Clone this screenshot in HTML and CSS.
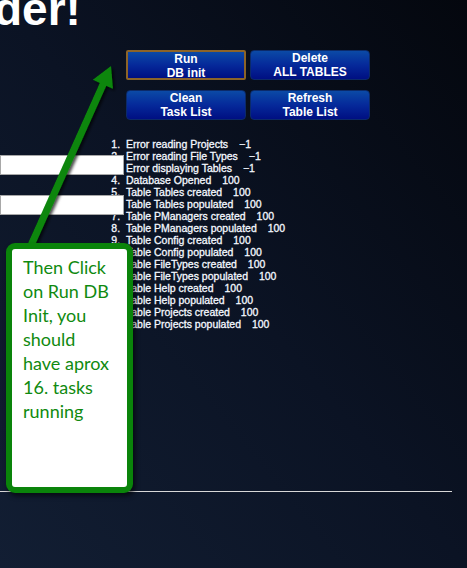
FILE: index.html
```html
<!DOCTYPE html>
<html>
<head>
<meta charset="utf-8">
<link rel="stylesheet" href="styles.css">
</head>
<body>
<div class="page">
  <h1 class="title">der!</h1>
  <div class="main">
    <div class="left">
      <input class="field" type="text">
      <input class="field field2" type="text">
    </div>
    <div class="right">
      <div class="buttons">
        <button class="btn btn-active">Run<br>DB init</button>
        <button class="btn">Delete<br>ALL TABLES</button>
        <button class="btn">Clean<br>Task List</button>
        <button class="btn">Refresh<br>Table List</button>
      </div>
      <ol class="tasks">
        <li>Error reading Projects <span class="v">−1</span></li>
        <li>Error reading File Types <span class="v">−1</span></li>
        <li>Error displaying Tables <span class="v">−1</span></li>
        <li>Database Opened <span class="v">100</span></li>
        <li>Table Tables created <span class="v">100</span></li>
        <li>Table Tables populated <span class="v">100</span></li>
        <li>Table PManagers created <span class="v">100</span></li>
        <li>Table PManagers populated <span class="v">100</span></li>
        <li>Table Config created <span class="v">100</span></li>
        <li>Table Config populated <span class="v">100</span></li>
        <li>Table FileTypes created <span class="v">100</span></li>
        <li>Table FileTypes populated <span class="v">100</span></li>
        <li>Table Help created <span class="v">100</span></li>
        <li>Table Help populated <span class="v">100</span></li>
        <li>Table Projects created <span class="v">100</span></li>
        <li>Table Projects populated <span class="v">100</span></li>
      </ol>
    </div>
  </div>
  <hr class="rule">

  <svg class="arrow" width="467" height="568" viewBox="0 0 467 568">
    <defs>
      <filter id="sh" x="-20%" y="-20%" width="140%" height="140%">
        <feDropShadow dx="2" dy="2" stdDeviation="1.5" flood-color="#000" flood-opacity="0.7"/>
      </filter>
    </defs>
    <g filter="url(#sh)" fill="#0a860a">
      <line x1="28" y1="252" x2="105" y2="80" stroke="#0a860a" stroke-width="7"/>
      <polygon points="111,66 92.8,79.8 112.9,88.8"/>
    </g>
  </svg>

  <div class="callout">Then Click on Run DB Init, you should have aprox 16. tasks running</div>
</div>
</body>
</html>
```

FILE: styles.css
```css
html, body {
  margin: 0;
  padding: 0;
}
body {
  width: 467px;
  height: 568px;
  overflow: hidden;
  background: linear-gradient(to top right, #121e33 0%, #0b1324 50%, #04070e 100%);
  font-family: "Liberation Sans", Arial, sans-serif;
}
.page {
  position: relative;
  display: flow-root;
  width: 467px;
  height: 568px;
}
.title {
  margin: -14px 0 0 -6px;
  height: 64px;
  font-size: 46px;
  line-height: 46px;
  font-weight: bold;
  color: #ffffff;
}
.main {
  display: flex;
  height: 441px;
}
.left {
  width: 124px;
  display: flex;
  flex-direction: column;
  padding-top: 105px;
  gap: 20px;
}
.field {
  position: relative;
  box-sizing: border-box;
  width: 124px;
  height: 20px;
  margin: 0;
  border: 1px solid #a8a8a8;
  background: #ffffff;
  padding: 0;
}
.right {
  margin-left: 2px;
  display: flex;
  flex-direction: column;
}
.buttons {
  display: grid;
  grid-template-columns: 120px 120px;
  grid-auto-rows: 30px;
  column-gap: 4px;
  row-gap: 10px;
}
.btn {
  box-sizing: border-box;
  margin: 0;
  padding: 0;
  border: 1px solid #0b2a6a;
  border-radius: 4px;
  background: linear-gradient(to bottom, #0b4aa6 0%, #05299a 50%, #000f82 100%);
  color: #ffffff;
  font-family: "Liberation Sans", Arial, sans-serif;
  font-size: 12px;
  font-weight: bold;
  line-height: 14px;
}
.btn-active {
  border: 2px solid #8c6428;
  border-radius: 2px;
}
.tasks {
  margin: 18px 0 0 -3px;
  padding: 0;
  color: #f4f8ff;
  font-size: 10.5px;
  line-height: 12px;
  -webkit-text-stroke: 0.3px #f4f8ff;
}
.tasks li {
  padding-left: 3px;
}
.v {
  margin-left: 8px;
}
.rule {
  margin: 0;
  width: 452px;
  height: 0;
  border: 0;
  border-top: 1px solid #d8d8d8;
}
.arrow {
  position: absolute;
  left: 0;
  top: 0;
  pointer-events: none;
}
.callout {
  position: absolute;
  left: 6px;
  top: 243px;
  box-sizing: border-box;
  width: 127px;
  height: 250px;
  border: 6px solid #0a840a;
  border-radius: 9px;
  background: #ffffff;
  box-shadow: 2px 3px 5px rgba(0, 0, 0, 0.6);
  padding: 6px 14px 0 11px;
  color: #108a10;
  font-family: Lato, "Open Sans", sans-serif;
  font-size: 18px;
  line-height: 24px;
}
```
